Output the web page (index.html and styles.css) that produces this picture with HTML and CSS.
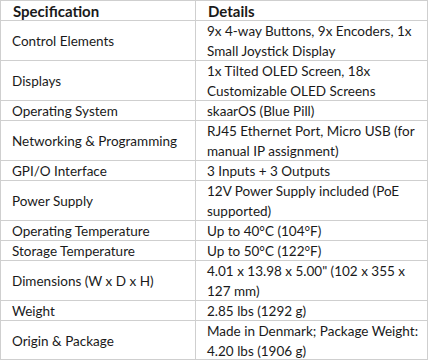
FILE: index.html
```html
<!DOCTYPE html>
<html lang="en">
<head>
<meta charset="utf-8">
<title>Specifications</title>
<link rel="stylesheet" href="styles.css">
</head>
<body>
<div class="spec-table">
  <div class="cell head"><span class="txt">Specification</span></div>
  <div class="cell head"><span class="txt">Details</span></div>

  <div class="cell key"><span class="txt">Control Elements</span></div>
  <div class="cell"><span class="txt">9x 4-way Buttons, 9x Encoders, 1x Small Joystick Display</span></div>

  <div class="cell key"><span class="txt">Displays</span></div>
  <div class="cell"><span class="txt">1x Tilted OLED Screen, 18x Customizable OLED Screens</span></div>

  <div class="cell key"><span class="txt">Operating System</span></div>
  <div class="cell"><span class="txt">skaarOS (Blue Pill)</span></div>

  <div class="cell key"><span class="txt">Networking &amp; Programming</span></div>
  <div class="cell"><span class="txt">RJ45 Ethernet Port, Micro USB (for manual IP assignment)</span></div>

  <div class="cell key"><span class="txt">GPI/O Interface</span></div>
  <div class="cell"><span class="txt">3 Inputs + 3 Outputs</span></div>

  <div class="cell key"><span class="txt">Power Supply</span></div>
  <div class="cell"><span class="txt">12V Power Supply included (PoE supported)</span></div>

  <div class="cell key"><span class="txt">Operating Temperature</span></div>
  <div class="cell"><span class="txt">Up to 40°C (104°F)</span></div>

  <div class="cell key"><span class="txt">Storage Temperature</span></div>
  <div class="cell"><span class="txt">Up to 50°C (122°F)</span></div>

  <div class="cell key"><span class="txt">Dimensions (W x D x H)</span></div>
  <div class="cell"><span class="txt">4.01 x 13.98 x 5.00" (102 x 355 x 127 mm)</span></div>

  <div class="cell key"><span class="txt">Weight</span></div>
  <div class="cell"><span class="txt">2.85 lbs (1292 g)</span></div>

  <div class="cell key last"><span class="txt">Origin &amp; Package</span></div>
  <div class="cell last"><span class="txt">Made in Denmark; Package Weight: 4.20 lbs (1906 g)</span></div>
</div>
</body>
</html>
```

FILE: styles.css
```css
html, body {
  margin: 0;
  padding: 0;
  background: #ffffff;
}

body {
  font-family: Lato, "Liberation Sans", sans-serif;
  font-size: 13.5px;
  color: #1a1a1a;
}

.spec-table {
  display: grid;
  grid-template-columns: 195px 232px;
  width: 428px;
  border-right: 1px solid #cfcfcf;
  border-bottom: 1px solid #cfcfcf;
  box-sizing: border-box;
}

.cell {
  border-top: 1px solid #cfcfcf;
  border-left: 1px solid #cfcfcf;
  padding: 0 4px 0 11px;
  display: flex;
  align-items: center;
  line-height: 20px;
}

.cell .txt {
  display: block;
  margin-bottom: -1px;
}

.cell.last .txt {
  margin-bottom: -2px;
}

.head {
  font-weight: 700;
  font-size: 15px;
}

.head .txt {
  padding-left: 1px;
}
```
